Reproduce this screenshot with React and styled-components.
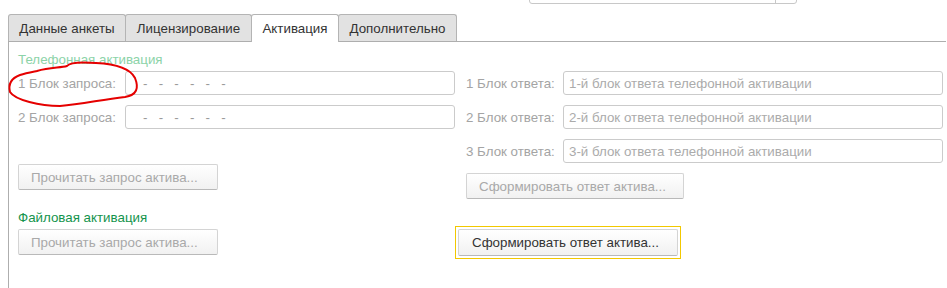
import React from 'react'
import styled, { createGlobalStyle } from 'styled-components'

const GlobalStyle = createGlobalStyle`
    html, body {
        margin: 0;
        padding: 0;
        background: #fff;
    }

    body {
        font-family: "Liberation Sans", Arial, sans-serif;
        font-size: 13.33px;
        color: #333;
    }
`

const Page = styled.div`
    position: relative;
    width: 947px;
    height: 288px;
    overflow: hidden;
`

const TopBar = styled.div`
    height: 14px;
    padding-left: 529px;
    overflow: hidden;
`

const SearchBox = styled.div`
    display: flex;
    width: 268px;
    height: 24px;
    margin-top: -20px;
    box-sizing: border-box;
    border: 1px solid #c8c8c8;
    border-radius: 3px;

    .field {
        flex: 1;
    }

    .pick {
        width: 20px;
        border-left: 1px solid #c8c8c8;
    }
`

const Frame = styled.div`
    margin: 0 1px 0 8px;
`

const TabStrip = styled.div`
    display: flex;
    align-items: flex-end;
    border-bottom: 1px solid #aeaeae;
`

const Tab = styled.div`
    position: relative;
    display: flex;
    align-items: center;
    justify-content: center;
    box-sizing: border-box;
    width: ${props => props.$width}px;
    height: ${props => (props.$active ? 28 : 27)}px;
    margin-bottom: ${props => (props.$active ? -1 : 0)}px;
    margin-left: -1px;
    border: 1px solid #b4b4b4;
    border-bottom: none;
    border-radius: 3px 3px 0 0;
    background: ${props => (props.$active ? '#fff' : '#e2e2e2')};
    color: #333;
    padding-bottom: ${props => (props.$active ? 1 : 0)}px;
    z-index: ${props => (props.$active ? 1 : 0)};

    &:first-child {
        margin-left: 0;
    }
`

const Body = styled.div`
    display: grid;
    grid-template-columns: 437px 477px;
    column-gap: 11px;
    height: 246px;
    padding-left: 9px;
    border-left: 1px solid #aeaeae;
`

const Column = styled.div`
    display: flex;
    flex-direction: column;
    align-items: flex-start;
    padding-top: ${props => props.$top || 0}px;
`

const SectionTitle = styled.div`
    line-height: 16px;
    margin-top: ${props => props.$gap}px;
    color: ${props => props.$color};
`

const FieldRow = styled.div`
    display: flex;
    align-items: center;
    align-self: stretch;
    height: 24px;
    margin-top: ${props => props.$gap || 0}px;
`

const Label = styled.div`
    flex: none;
    width: ${props => props.$width}px;
    color: #a4a4a4;
    white-space: nowrap;
`

const Input = styled.div`
    flex: 1;
    display: flex;
    align-items: center;
    box-sizing: border-box;
    height: 24px;
    padding-left: ${props => props.$pad}px;
    border: 1px solid #cbcbcb;
    border-radius: 3px;
    background: #fff;
    color: #ababab;
    white-space: nowrap;
`

const Mask = styled.div`
    display: flex;
    gap: 11.2px;
    color: #9a9a9a;
`

const Button = styled.div`
    display: flex;
    align-items: center;
    box-sizing: border-box;
    width: ${props => props.$width}px;
    height: ${props => props.$height || 26}px;
    margin-top: ${props => props.$gap || 0}px;
    padding-left: ${props => props.$pad || 12}px;
    border: 1px solid #d4d4d4;
    border-bottom-color: #b9b9b9;
    border-radius: 2px;
    background: linear-gradient(#ffffff, #f1f1f1);
    color: ${props => (props.$disabled ? '#a9a9a9' : '#333')};
    white-space: nowrap;
`

const FocusRing = styled.div`
    margin: ${props => props.$gap}px 0 0 -11px;
    padding: 2px;
    border: 1px solid #f2c800;
`

const Scribble = styled.svg`
    position: absolute;
    left: 0;
    top: 0;
    pointer-events: none;
`

const dashes = [0, 1, 2, 3, 4, 5]

const MaskField = () => (
    <Input $pad={17}>
        <Mask>
            {dashes.map(i => (
                <span key={i}>-</span>
            ))}
        </Mask>
    </Input>
)

const App = () => {
    return (
        <Page>
            <GlobalStyle />
            <TopBar>
                <SearchBox>
                    <div className="field" />
                    <div className="pick" />
                </SearchBox>
            </TopBar>
            <Frame>
                <TabStrip>
                    <Tab $width={118}>Данные анкеты</Tab>
                    <Tab $width={127}>Лицензирование</Tab>
                    <Tab $width={88} $active>Активация</Tab>
                    <Tab $width={119}>Дополнительно</Tab>
                </TabStrip>
                <Body>
                    <Column>
                        <SectionTitle $gap={10} $color="#8cd3a8">
                            Телефонная активация
                        </SectionTitle>
                        <FieldRow $gap={3}>
                            <Label $width={107}>1 Блок запроса:</Label>
                            <MaskField />
                        </FieldRow>
                        <FieldRow $gap={10}>
                            <Label $width={107}>2 Блок запроса:</Label>
                            <MaskField />
                        </FieldRow>
                        <Button $width={200} $gap={35} $disabled>
                            Прочитать запрос актива...
                        </Button>
                        <SectionTitle $gap={20} $color="#14944c">
                            Файловая активация
                        </SectionTitle>
                        <Button $width={200} $gap={3} $disabled>
                            Прочитать запрос актива...
                        </Button>
                    </Column>
                    <Column $top={29}>
                        <FieldRow>
                            <Label $width={97}>1 Блок ответа:</Label>
                            <Input $pad={5}>1-й блок ответа телефонной активации</Input>
                        </FieldRow>
                        <FieldRow $gap={10}>
                            <Label $width={97}>2 Блок ответа:</Label>
                            <Input $pad={5}>2-й блок ответа телефонной активации</Input>
                        </FieldRow>
                        <FieldRow $gap={10}>
                            <Label $width={97}>3 Блок ответа:</Label>
                            <Input $pad={5}>3-й блок ответа телефонной активации</Input>
                        </FieldRow>
                        <Button $width={218} $gap={10} $disabled>
                            Сформировать ответ актива...
                        </Button>
                        <FocusRing $gap={27}>
                            <Button $width={220} $height={27} $pad={13}>
                                Сформировать ответ актива...
                            </Button>
                        </FocusRing>
                    </Column>
                </Body>
            </Frame>
            <Scribble width="947" height="288" viewBox="0 0 947 288">
                <path
                    d="M 37 71 C 50 67, 60 68, 67 66 C 70 62, 82 62, 96 63 C 116 64, 130 68, 135 78 C 139 88, 137 95, 125 97 C 100 100, 82 104, 60 106 C 40 106, 15 100, 10 92 C 8 84, 12 78, 20 75 C 26 73, 32 72, 37 71"
                    fill="none"
                    stroke="#e50000"
                    strokeWidth="2"
                    strokeLinecap="round"
                    strokeLinejoin="round"
                />
            </Scribble>
        </Page>
    )
}

export default App
